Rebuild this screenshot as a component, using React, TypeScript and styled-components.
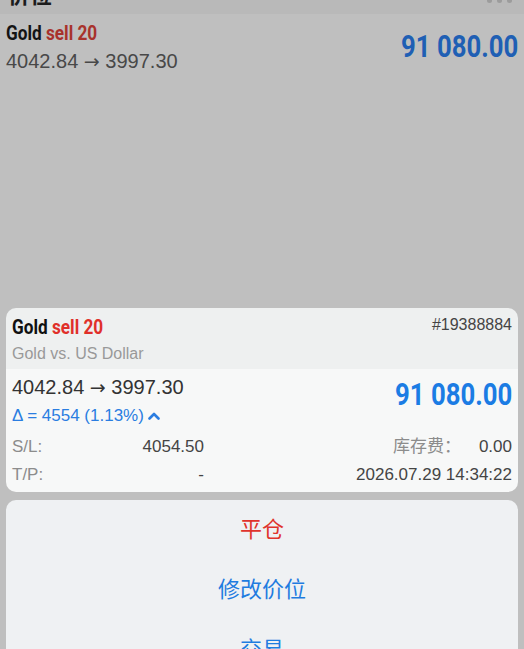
import React from "react";
import styled, { createGlobalStyle } from "styled-components";

const GlobalStyle = createGlobalStyle`
  html, body {
    margin: 0;
    padding: 0;
  }
  body {
    font-family: "Liberation Sans", Arial, sans-serif;
    background: #bfbfbf;
  }
`;

const NARROW = `"Roboto", "Liberation Sans", sans-serif`;
const CJK = `"Liberation Sans", "Noto Sans CJK SC", sans-serif`;

const Screen = styled.div`
  width: 524px;
  height: 649px;
  overflow: hidden;
  background: #bfbfbf;
  display: flex;
  flex-direction: column;
`;

const TopBar = styled.div`
  height: 14px;
  flex: none;
  background: #b9b9b9;
  display: flex;
  justify-content: space-between;
  align-items: flex-end;
  padding: 0 12px 0 8px;
  overflow: hidden;
`;

const TopTitle = styled.div`
  font: bold 22px/22px ${CJK};
  color: #1c1c1c;
  margin-bottom: 7px;
`;

const Dots = styled.div`
  align-self: flex-start;
  display: flex;
  gap: 5px;
  margin-top: -2px;
  span {
    width: 5px;
    height: 5px;
    border-radius: 50%;
    background: #9c9c9c;
  }
`;

const ListRow = styled.div`
  height: 66px;
  flex: none;
  padding: 0 6px;
  display: flex;
  justify-content: space-between;
  align-items: center;
`;

const Stack = styled.div`
  display: flex;
  flex-direction: column;
`;

const Symbol = styled.div<{ $dim?: boolean }>`
  font: bold 20px/24px ${NARROW};
  color: ${(p) => (p.$dim ? "#141414" : "#111")};
  transform: scaleX(0.86);
  transform-origin: left center;
  white-space: nowrap;
  span {
    color: ${(p) => (p.$dim ? "#a8322c" : "#e0302a")};
  }
`;

const Prices = styled.div<{ $dim?: boolean; $shift?: number }>`
  font-size: 20px;
  line-height: 26px;
  margin-top: ${(p) => p.$shift ?? 0}px;
  color: ${(p) => (p.$dim ? "#484848" : "#333")};
  white-space: nowrap;
`;

const Arrow = styled.span`
  font-family: "DejaVu Sans", sans-serif;
  font-size: 19px;
`;

const Profit = styled.div<{ $dim?: boolean; $shift?: number }>`
  font: bold 31px/34px ${NARROW};
  color: ${(p) => (p.$dim ? "#1f5fb4" : "#1b7ce4")};
  transform: scaleX(0.83);
  transform-origin: right center;
  margin-top: ${(p) => p.$shift ?? 0}px;
  white-space: nowrap;
`;

const SheetArea = styled.div`
  padding: 228px 6px 0;
  display: flex;
  flex-direction: column;
  gap: 8px;
`;

const Card = styled.div`
  border-radius: 10px;
  overflow: hidden;
`;

const CardHead = styled.div`
  height: 61px;
  box-sizing: border-box;
  background: #eef0f0;
  padding: 7px 6px 0;
`;

const HeadRow = styled.div`
  display: flex;
  justify-content: space-between;
  align-items: flex-start;
`;

const Ticket = styled.div`
  font-size: 16px;
  line-height: 20px;
  color: #444;
`;

const Subtitle = styled.div`
  font-size: 16px;
  line-height: 22px;
  color: #999;
  margin-top: 4px;
`;

const CardBody = styled.div`
  height: 123px;
  box-sizing: border-box;
  background: #f7f8f8;
  padding: 5px 6px 0;
`;

const PriceRow = styled.div`
  display: flex;
  justify-content: space-between;
  align-items: flex-start;
`;

const Delta = styled.div`
  font-size: 17px;
  line-height: 22px;
  color: #2a7de1;
  display: flex;
  align-items: center;
  gap: 4px;
  margin-top: 5px;
`;

const InfoGrid = styled.div`
  display: grid;
  grid-template-columns: 192px 1fr;
  row-gap: 6px;
  margin-top: 9px;
`;

const InfoRow = styled.div`
  display: flex;
  justify-content: space-between;
  font-size: 17px;
  line-height: 22px;
  color: #444;
`;

const Label = styled.span`
  color: #8c8c8c;
`;

const Right = styled.div`
  display: flex;
  justify-content: flex-end;
  gap: 18px;
  font-size: 17px;
  line-height: 22px;
  color: #444;
`;

const CjkLabel = styled.span`
  font-family: ${CJK};
  color: #8c8c8c;
`;

const ActionSheet = styled.div`
  border-radius: 10px;
  background: #eff1f3;
  display: flex;
  flex-direction: column;
`;

const Action = styled.div<{ $danger?: boolean }>`
  height: 60px;
  display: flex;
  align-items: center;
  justify-content: center;
  font: 22px/30px ${CJK};
  color: ${(p) => (p.$danger ? "#e0332c" : "#1f7ce0")};
`;

const Chevron = () => (
  <svg width="12" height="8" viewBox="0 0 12 8">
    <polyline
      points="1.5,6.5 6,2 10.5,6.5"
      fill="none"
      stroke="#2a7de1"
      strokeWidth="2.6"
      strokeLinecap="round"
      strokeLinejoin="round"
    />
  </svg>
);

export default function App() {
  return (
    <>
      <GlobalStyle />
      <Screen>
        <TopBar>
          <TopTitle>价位</TopTitle>
          <Dots>
            <span />
            <span />
            <span />
          </Dots>
        </TopBar>
        <ListRow>
          <Stack>
            <Symbol $dim>
              Gold <span>sell 20</span>
            </Symbol>
            <Prices $dim $shift={3}>
              4042.84 <Arrow>→</Arrow> 3997.30
            </Prices>
          </Stack>
          <Profit $dim>91 080.00</Profit>
        </ListRow>

        <SheetArea>
          <Card>
            <CardHead>
              <HeadRow>
                <Symbol>
                  Gold <span>sell 20</span>
                </Symbol>
                <Ticket>#19388884</Ticket>
              </HeadRow>
              <Subtitle>Gold vs. US Dollar</Subtitle>
            </CardHead>
            <CardBody>
              <PriceRow>
                <Stack>
                  <Prices>
                    4042.84 <Arrow>→</Arrow> 3997.30
                  </Prices>
                  <Delta>
                    Δ = 4554 (1.13%) <Chevron />
                  </Delta>
                </Stack>
                <Profit $shift={4}>91 080.00</Profit>
              </PriceRow>
              <InfoGrid>
                <InfoRow>
                  <Label>S/L:</Label>
                  <span>4054.50</span>
                </InfoRow>
                <Right>
                  <CjkLabel>库存费：</CjkLabel>
                  <span>0.00</span>
                </Right>
                <InfoRow>
                  <Label>T/P:</Label>
                  <span>-</span>
                </InfoRow>
                <Right>
                  <span>2026.07.29 14:34:22</span>
                </Right>
              </InfoGrid>
            </CardBody>
          </Card>

          <ActionSheet>
            <Action $danger>平仓</Action>
            <Action>修改价位</Action>
            <Action>交易</Action>
          </ActionSheet>
        </SheetArea>
      </Screen>
    </>
  );
}
